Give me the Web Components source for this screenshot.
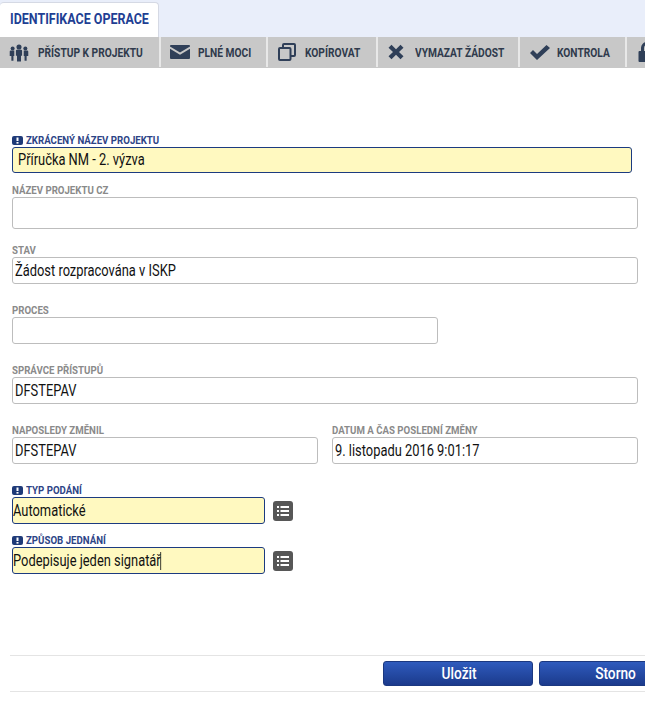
<!DOCTYPE html>
<html lang="cs">
<head>
<meta charset="utf-8">
<title>Identifikace operace</title>
<style>
  html, body { margin: 0; padding: 0; background: #fff; overflow: hidden; }
  body { width: 645px; height: 701px; font-family: Roboto, "Liberation Sans", sans-serif; }
  .form { display: flex; flex-direction: column; padding: 0 7px 0 12px; height: 582px; box-sizing: border-box; }
  .row { display: flex; gap: 14px; }
</style>
</head>
<body>
<tab-bar>IDENTIFIKACE OPERACE</tab-bar>
<tool-bar>
  <tool-button w="161" icon="people">PŘÍSTUP K PROJEKTU</tool-button>
  <tool-button w="107" icon="mail">PLNÉ MOCI</tool-button>
  <tool-button w="110" icon="copy">KOPÍROVAT</tool-button>
  <tool-button w="142" icon="cross">VYMAZAT ŽÁDOST</tool-button>
  <tool-button w="107" icon="check">KONTROLA</tool-button>
  <tool-button w="40" icon="lock"></tool-button>
</tool-bar>
<div class="form">
  <form-field required w="620" h="26" top="65" lh="24" label="ZKRÁCENÝ NÁZEV PROJEKTU" value="Příručka NM - 2. výzva" pad="5"></form-field>
  <form-field w="626" h="32" top="10" label="NÁZEV PROJEKTU CZ"></form-field>
  <form-field w="626" h="27" top="14" label="STAV" value="Žádost rozpracována v ISKP"></form-field>
  <form-field w="426" h="27" top="19" label="PROCES"></form-field>
  <form-field w="626" h="27" top="19" label="SPRÁVCE PŘÍSTUPŮ" value="DFSTEPAV"></form-field>
  <div class="row">
    <form-field w="306" h="27" top="19" label="NAPOSLEDY ZMĚNIL" value="DFSTEPAV"></form-field>
    <form-field w="306" h="27" top="19" label="DATUM A ČAS POSLEDNÍ ZMĚNY" value="9. listopadu 2016 9:01:17"></form-field>
  </div>
  <form-field required list w="253" h="27" top="19" label="TYP PODÁNÍ" value="Automatické" pad="0"></form-field>
  <form-field required list caret w="253" h="27" top="9" label="ZPŮSOB JEDNÁNÍ" value="Podepisuje jeden signatář" pad="0"></form-field>
</div>
<action-bar>
  <action-button>Uložit</action-button>
  <action-button>Storno</action-button>
</action-bar>

<script>
const icons = {
  people: `<svg width="20" height="19" viewBox="0 0 22 20" fill="#2f3f58"><circle cx="11" cy="4" r="2.800"/><path d="M7.600 8.200q0-1.200 1.200-1.200h4.400q1.200 0 1.200 1.200v5.300h-1.200V20H8.800v-6.500H7.600z"/><circle cx="4" cy="5.500" r="2.200"/><path d="M.8 9q0-1.200 1.200-1.200h3.800v6H4.900V19H2.600v-5.200H.8z"/><circle cx="18" cy="5.500" r="2.200"/><path d="M21.200 9q0-1.200-1.200-1.200h-3.800v6h.9V19h2.300v-5.200h1.800z"/></svg>`,
  mail: `<svg width="20" height="14" viewBox="0 0 20 14" fill="#2f3f58"><path d="M1 0h18q1 0 1 1v.6l-10 6-10-6V1q0-1 1-1z"/><path d="M0 3.800l10 6 10-6V13q0 1-1 1H1q-1 0-1-1z"/></svg>`,
  copy: `<svg width="18" height="18" viewBox="0 0 18 18" fill="none" stroke="#2f3f58" stroke-width="2"><rect x="1" y="5" width="11.500" height="12" rx="1"/><path d="M5 5V2q0-1 1-1h10q1 0 1 1v10q0 1-1 1h-3.500"/></svg>`,
  cross: `<svg width="16" height="16" viewBox="0 0 16 16" fill="#2f3f58"><path d="M3.500.8L8 5.200 12.500.8 15.500 3.800 11 8l4.500 4.200-3 3L8 10.800l-4.500 4.400-3-3L5 8 .5 3.800z"/></svg>`,
  check: `<svg width="20" height="15" viewBox="0 0 20 15" fill="#2f3f58"><path d="M0 8l3-3 4 4 9.500-9L20 3 7 15z"/></svg>`,
  lock: `<svg width="20" height="20" viewBox="0 0 20 20" fill="#2f3f58"><path d="M3 9V6a6 6 0 0 1 12 0v3h1.500q1 0 1 1v9q0 1-1 1H1.500q-1 0-1-1v-9q0-1 1-1zm3 0h6V6a3 3 0 0 0-6 0z"/></svg>`
};

// no condensed face is installed, so squeeze the text sideways
const squeeze = `.cond { display: inline-block; transform: scaleX(var(--sx)); transform-origin: 0 50%; white-space: nowrap; }`;

class TabBar extends HTMLElement {
  constructor() {
    super();
    this.attachShadow({ mode: "open" }).innerHTML = `
      <style>
        ${squeeze}
        :host { display: flex; height: 37px; background: #e9eefa; align-items: flex-end; }
        .tab { width: 159px; height: 35px; box-sizing: border-box; padding-left: 10px; background: #fff;
          border: 1px solid #d5d9e4; border-bottom: 0; border-radius: 4px 4px 0 0; border-left: 0; overflow: hidden;
          font: 700 15.500px/33px Roboto, sans-serif; color: #1f3f94; --sx: .805; }
      </style>
      <div class="tab"><span class="cond"><slot></slot></span></div>`;
  }
}
customElements.define("tab-bar", TabBar);

class ToolBar extends HTMLElement {
  constructor() {
    super();
    this.attachShadow({ mode: "open" }).innerHTML = `
      <style>:host { display: flex; height: 31px; background: #c8c8c8; overflow: hidden; }</style><slot></slot>`;
  }
}
customElements.define("tool-bar", ToolBar);

class ToolButton extends HTMLElement {
  constructor() {
    super();
    const icon = this.getAttribute("icon");
    const offset = { people: 9, mail: 9, copy: 10, cross: 10, check: 10, lock: 11 }[icon];
    const gap = { people: 9, mail: 8, copy: 9, cross: 11, check: 7, lock: 0 }[icon];
    this.attachShadow({ mode: "open" }).innerHTML = `
      <style>
        ${squeeze}
        :host { display: flex; flex: none; align-items: center; box-sizing: border-box; height: 30px;
          width: ${this.getAttribute("w")}px; padding-left: ${offset}px; gap: ${gap}px; border-right: 2px solid #e8e8e8;
          font: 700 13px Roboto, sans-serif; color: #2f3a4c; --sx: .785; }
        svg { display: block; flex: none; }
      </style>${icons[icon]}<span class="cond"><slot></slot></span>`;
  }
}
customElements.define("tool-button", ToolButton);

class FormField extends HTMLElement {
  constructor() {
    super();
    const req = this.hasAttribute("required");
    const get = (n, d) => this.getAttribute(n) ?? d;
    this.attachShadow({ mode: "open" }).innerHTML = `
      <style>
        ${squeeze}
        :host { display: block; margin-top: ${get("top", 0)}px; font-family: Roboto, sans-serif; }
        .label { display: flex; align-items: center; gap: 3px; height: 14px;
          font-size: 11.500px; line-height: 14px; font-weight: 700; --sx: .84;
          color: ${req ? "#2d4486" : "#8a8a8a"}; }
        .mark { display: block; flex: none; }
        .line { display: flex; align-items: center; gap: 8px; }
        .box { box-sizing: border-box; width: ${get("w", 300)}px; height: ${get("h", 27)}px;
          padding-left: ${get("pad", 2)}px; border-radius: 3px; border: 1px solid ${req ? "#1c3b80" : "#bdbdbd"};
          background: ${req ? "#fff9c0" : "#fff"}; font-size: 16px; line-height: ${get("lh", 26)}px; color: #111; --sx: .805; }
        .caret { display: inline-block; width: 1px; height: 18px; background: #111; vertical-align: -4px; margin-left: -1px; }
        list-button { flex: none; }
      </style>
      <div class="label">${req ? '<svg class="mark" width="11" height="9" viewBox="0 0 11 9"><rect width="11" height="9" rx="2" fill="#1e3a78"/><rect x="4.500" y="1.500" width="2" height="3.500" fill="#fff"/><rect x="4.500" y="6" width="2" height="1.600" fill="#fff"/></svg>' : ""}<span class="cond">${get("label", "")}</span></div>
      <div class="line">
        <div class="box"><span class="cond">${get("value", "")}${this.hasAttribute("caret") ? '<span class="caret"></span>' : ""}</span></div>
        ${this.hasAttribute("list") ? "<list-button></list-button>" : ""}
      </div>`;
  }
}
customElements.define("form-field", FormField);

class ListButton extends HTMLElement {
  constructor() {
    super();
    this.attachShadow({ mode: "open" }).innerHTML = `
      <style>
        :host { display: flex; width: 20px; height: 20px; align-items: center; justify-content: center;
          background: #575757; border-radius: 3px; }
        svg { display: block; }
      </style>
      <svg width="12" height="10" viewBox="0 0 12 10" fill="#fff">
        <rect x="0" y="0" width="2" height="2"/><rect x="3.500" y="0" width="8.500" height="2"/>
        <rect x="0" y="4" width="2" height="2"/><rect x="3.500" y="4" width="8.500" height="2"/>
        <rect x="0" y="8" width="2" height="2"/><rect x="3.500" y="8" width="8.500" height="2"/>
      </svg>`;
  }
}
customElements.define("list-button", ListButton);

class ActionBar extends HTMLElement {
  constructor() {
    super();
    this.attachShadow({ mode: "open" }).innerHTML = `
      <style>
        :host { display: flex; gap: 6px; box-sizing: border-box; margin: 5px 0 0 10px; height: 37px;
          padding: 5px 0 0 373px; border-top: 1px solid #e4e4e4; border-bottom: 1px solid #e4e4e4; overflow: hidden; }
      </style><slot></slot>`;
  }
}
customElements.define("action-bar", ActionBar);

class ActionButton extends HTMLElement {
  constructor() {
    super();
    this.attachShadow({ mode: "open" }).innerHTML = `
      <style>
        :host { display: block; flex: none; box-sizing: border-box; width: 150px; height: 25px; padding-left: 3px; text-align: center;
          border-radius: 3px; border: 1px solid #1b3880; background: linear-gradient(#2f5bbd, #1b3a8c);
          color: #fff; font: 500 16.500px/23px Roboto, sans-serif; }
        span { display: inline-block; transform: scaleX(.83); }
      </style><span><slot></slot></span>`;
  }
}
customElements.define("action-button", ActionButton);
</script>
</body>
</html>
